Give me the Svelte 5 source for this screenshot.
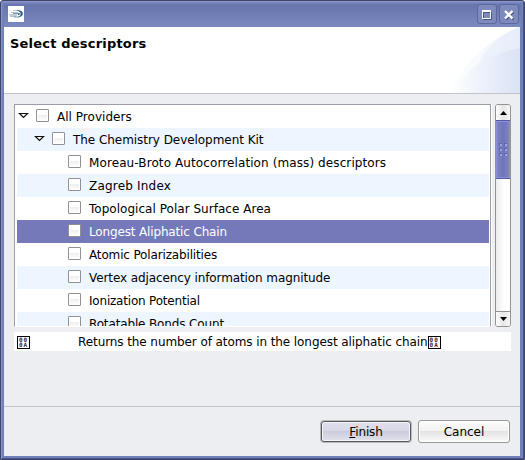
<script>
  const rows = [
    { text: 'All Providers', level: 0, spacing: 0.03 },
    { text: 'The Chemistry Development Kit', level: 1, spacing: -0.05 },
    { text: 'Moreau-Broto Autocorrelation (mass) descriptors', level: 2, spacing: 0.1 },
    { text: 'Zagreb Index', level: 2, spacing: 0.2 },
    { text: 'Topological Polar Surface Area', level: 2, spacing: 0.03 },
    { text: 'Longest Aliphatic Chain', level: 2, spacing: -0.15, selected: true },
    { text: 'Atomic Polarizabilities', level: 2, spacing: -0.15 },
    { text: 'Vertex adjacency information magnitude', level: 2, spacing: -0.1 },
    { text: 'Ionization Potential', level: 2, spacing: -0.2 },
    { text: 'Rotatable Bonds Count', level: 2, spacing: -0.14 }
  ];
</script>

{#snippet control()}
  <span class="code"><i>00</i><i>0A</i></span>
{/snippet}

<div class="window">
  <header class="titlebar">
    <svg class="logo" width="16" height="16" viewBox="0 0 16 16">
      <rect width="16" height="16" fill="#fff" />
      <path d="M5 4.500h5M3 6.500h7M2 10.500h6" fill="none" stroke="#b4c5d2" />
      <path d="M5 7.500h7M1.500 9h7.500M6 11h5" stroke="#7d9bb1" />
      <path d="M9 4.500c3-.6 5.500.6 5.800 3C15 10 12.500 11.200 9.500 11.300c2-.9 3.200-2 3.200-3.500S11 5.300 9 4.500z" fill="#315f83" />
      <path d="M9.500 7.800h3.300l-2.600 1.500z" fill="#315f83" />
    </svg>
    <span class="grow"></span>
    <button class="wbtn" aria-label="Maximize">
      <svg width="18" height="18" viewBox="0 0 18 18"><path d="M5.500 7.500h8v7h-8z" fill="none" stroke="#485487" /><path d="M4.500 6h8v7.500h-8z" fill="none" stroke="#fff" /><path d="M4 6h9" stroke="#fff" stroke-width="2" /></svg>
    </button>
    <button class="wbtn" aria-label="Close">
      <svg width="18" height="18" viewBox="0 0 18 18"><path d="M6 7l7.500 7.500M13.500 7L6 14.500" stroke="#485487" stroke-width="2" /><path d="M5 6l7.500 7.500M12.500 6L5 13.500" stroke="#fff" stroke-width="2.300" /></svg>
    </button>
  </header>

  <section class="banner">
    <h1>Select descriptors</h1>
    <svg width="75" height="66" viewBox="0 0 75 66">
      <defs>
        <linearGradient id="outer"><stop offset="0" stop-color="#fff" /><stop offset=".4" stop-color="#f8fafd" /><stop offset="1" stop-color="#e8eefa" /></linearGradient>
        <linearGradient id="inner"><stop offset="0" stop-color="#fff" /><stop offset="1" stop-color="#dae2f5" /></linearGradient>
      </defs>
      <path d="M4 66C16 38 43 12 75 0V66z" fill="url(#outer)" />
      <path d="M35 34C46 17 56 7 75 0V24z" fill="#e6ecf9" opacity=".5" />
      <path d="M4 66C20 42 44 26 75 21V66z" fill="url(#inner)" />
    </svg>
  </section>

  <main>
    <div class="treewrap">
      <div class="tree">
        {#each rows as row, i}
          <div class="row l{row.level}" class:even={i % 2 === 1} class:selected={row.selected}>
            {#if row.level < 2}
              <svg class="arrow" width="11" height="7" viewBox="0 0 11 7"><path d="M1.500 1.500h8L5.500 5.500z" fill="#fff" stroke="#111" stroke-width="1.200" /></svg>
            {/if}
            <span class="check"></span>
            <span class="label" style="letter-spacing: {row.spacing}px">{row.text}</span>
          </div>
        {/each}
      </div>
      <div class="scroll">
        <div class="step"><svg width="7" height="4" viewBox="0 0 7 4"><path d="M3.500 0L7 4H0z" /></svg></div>
        <div class="thumb"><div class="grip">{#each Array(6) as _}<b></b>{/each}</div></div>
        <div class="track"></div>
        <div class="step"><svg width="7" height="4" viewBox="0 0 7 4"><path d="M0 0h7L3.500 4z" /></svg></div>
      </div>
    </div>
    <div class="desc">{@render control()}<span class="dtext">Returns the number of atoms in the longest aliphatic chain</span>{@render control()}</div>
  </main>

  <footer>
    <button class="btn default"><span><u>F</u>inish</span></button>
    <button class="btn"><span>Cancel</span></button>
  </footer>
</div>

<style>
  :global(body) { margin: 0; background: #fff; }
  .window, .window * { box-sizing: border-box; }
  .window {
    width: 525px; height: 460px; display: flex; flex-direction: column;
    padding: 1px 4px 3px 3px;
    border: 1px solid #3f4568; border-radius: 3px 3px 0 0;
    background: #7080b9; box-shadow: inset 1px 1px #8795ca, inset -1px -1px #485487;
    font: 12px "DejaVu Sans", sans-serif; color: #000; overflow: hidden;
  }
  .titlebar {
    height: 25px; flex: none; display: flex; align-items: flex-start; gap: 2px;
    padding: 2px 2px 0 4px; margin-right: -1px;
    background: linear-gradient(#7e8bc2 0, #6875ac 12%, #7b89c1 100%);
  }
  .logo { margin-top: 2px; }
  .grow { flex: 1; }
  .wbtn { width: 20px; height: 20px; padding: 0; border: 1px solid #5b689f; border-radius: 3px; background: #7e8abb; display: block; }
  .wbtn svg { display: block; }
  .banner { height: 67px; flex: none; display: flex; background: #fff; border-bottom: 1px solid #c3c4c8; overflow: hidden; }
  h1 { flex: 1; margin: 8px 0 0 6px; font: bold 13px/17px "DejaVu Sans", sans-serif; letter-spacing: .2px; }
  .banner svg { display: block; }
  main { flex: 1; background: #edeef2; padding: 10px 9px 0 10px; }
  .treewrap { height: 223px; display: flex; justify-content: space-between; }
  .tree { width: 477px; height: 223px; overflow: hidden; padding: 0 1px 0 2px; background: #fff; border: 1px solid #9c9da9; border-bottom-color: #fff; box-shadow: 1px 0 #fff; }
  .row { height: 23px; display: flex; align-items: center; white-space: nowrap; }
  .l0 { padding-left: 1px; }
  .l1 { padding-left: 17px; }
  .l2 { padding-left: 51px; }
  .even { background: #edf5fe; }
  .selected { background: #7679b9; color: #fff; }
  .arrow { margin: 0 7px 2px 0; }
  .check { width: 13px; height: 13px; margin: 0 8px 2px 0; border: 1px solid #919191; border-radius: 1px; background: linear-gradient(#fff 45%, #eee 46%, #fff); box-shadow: inset 0 0 0 1px #fff; }
  .scroll { width: 16px; border: 1px solid #929292; border-radius: 3px; display: flex; flex-direction: column; background: #fff; overflow: hidden; }
  .step { height: 15px; display: flex; align-items: center; justify-content: center; background: linear-gradient(90deg, #fff, #e5e5e5 50%, #f7f7f7); }
  .step:last-child { border-top: 1px solid #929292; }
  .thumb { height: 59px; margin: 0 -1px; border: 1px solid #54589d; background: linear-gradient(90deg, #8286c8, #7175b3 50%, #8084c4); box-shadow: inset 0 0 0 1px #8d90de; display: flex; align-items: center; justify-content: center; }
  .grip { display: grid; grid-template-columns: 3px 3px; gap: 2px; }
  .grip b { width: 3px; height: 3px; background: #a0a4e4; border: solid #6266a6; border-width: 1px 0 0 1px; }
  .track { flex: 1; background: linear-gradient(90deg, #ececec, #fff 60%); }
  .desc { height: 19px; margin-top: 5px; padding-left: 3px; background: #fff; display: flex; align-items: center; }
  .dtext { margin-left: 48px; white-space: nowrap; letter-spacing: -.085px; }
  .code { width: 13px; height: 13px; margin-top: 1px; border: 1px solid #000; display: flex; flex-direction: column; padding: 0 1px; }
  .code i { font: bold 6px/5.500px "DejaVu Sans Mono", monospace; letter-spacing: 1px; color: #3a2540; }
  footer { height: 50px; flex: none; display: flex; justify-content: flex-end; gap: 7px; padding: 13px 10px 0 0; background: #edeef2; border-top: 1px solid #c3c4c8; }
  .btn { width: 92px; height: 23px; padding: 0; border: 1px solid #999; border-radius: 3px; background: linear-gradient(#fcfcfc, #f2f2f2 49%, #e3e3e3 50%, #fbfbfb); font: inherit; color: #000; box-shadow: inset 0 0 0 1px #fff; }
  .default { width: 90px; letter-spacing: -.15px; border-color: #55555f; background: linear-gradient(#e0e0ec, #d8d8e4 49%, #cbcbdb 50%, #e2e2ec); box-shadow: inset 0 0 0 1px #f5f5fc, 0 0 0 1px #bbb; height: 21px; margin-top: 1px; }
</style>
